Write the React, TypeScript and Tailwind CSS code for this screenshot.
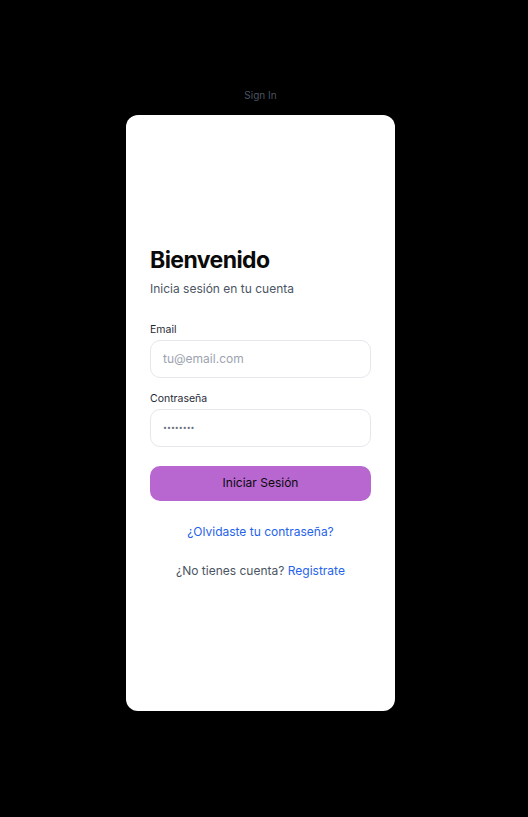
import { useState } from "react"

export default function App() {
  const [email, setEmail] = useState("")
  const [password, setPassword] = useState("12345678")

  return (
    <div
      className="min-h-[817px] w-full bg-black flex flex-col items-center pr-[7px]"
      style={{ fontFamily: "Inter, 'Noto Sans', sans-serif" }}
    >
      <p className="mt-[87px] text-[10px] leading-4 text-[#4b5563]">Sign In</p>
      <div className="mt-3 w-[269px] h-[596px] bg-white rounded-xl flex flex-col justify-center px-6 pb-[2px]">
        <h1 className="text-[23px] leading-8 font-bold text-[#0a0a0a] tracking-tight">Bienvenido</h1>
        <p className="mt-[3px] text-[12px] leading-5 text-[#4b5563]">Inicia sesión en tu cuenta</p>

        <label className="mt-[23px] text-[10.5px] leading-4 text-[#1f2937]">Email</label>
        <input
          type="email"
          value={email}
          onChange={(e) => setEmail(e.target.value)}
          placeholder="tu@email.com"
          className="mt-0.5 h-[38px] w-full rounded-[10px] border border-[#e5e7eb] px-3 text-[12px] text-[#111827] placeholder:text-[#9ca3af] outline-none"
        />

        <label className="mt-[13px] text-[10.5px] leading-4 text-[#1f2937]">Contraseña</label>
        <input
          type="password"
          value={password}
          onChange={(e) => setPassword(e.target.value)}
          className="mt-0.5 h-[38px] w-full rounded-[10px] border border-[#e5e7eb] px-3 text-[7px] text-[#6b7280] outline-none"
        />

        <button className="mt-[19px] h-[35px] w-full rounded-[10px] bg-[#b866d0] text-[12px] text-[#0a0a0a]">
          Iniciar Sesión
        </button>

        <a className="mt-[21px] text-center text-[12px] leading-5 text-[#2563eb]">¿Olvidaste tu contraseña?</a>

        <p className="mt-[19px] text-center text-[12px] leading-5 text-[#4b5563]">
          ¿No tienes cuenta? <a className="text-[#2563eb]">Registrate</a>
        </p>
      </div>
    </div>
  )
}
